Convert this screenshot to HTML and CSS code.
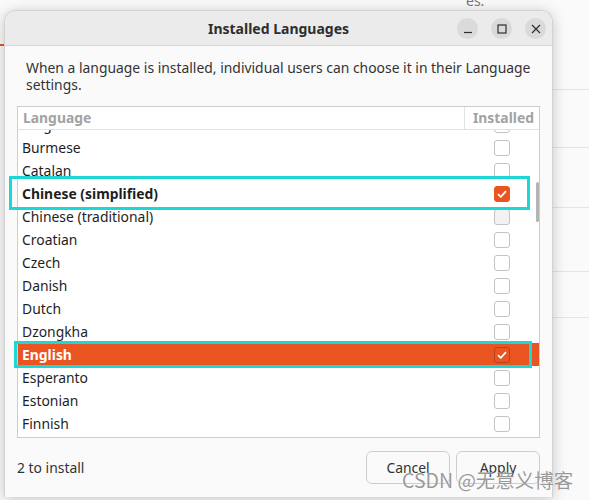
FILE: index.html
```html
<!DOCTYPE html>
<html>
<head>
<meta charset="UTF-8">
<title>Installed Languages</title>
<link rel="stylesheet" href="styles.css">
</head>
<body>

<div class="desktop">
	<div class="behind">
		<div class="behind-tab"></div>
		<div class="behind-line" style="top: 89px"></div>
		<div class="behind-line" style="top: 147px"></div>
		<div class="behind-line" style="top: 207px"></div>
		<div class="behind-line" style="top: 271px"></div>
		<div class="behind-line" style="top: 317px"></div>
		<span class="behind-text">es.</span>
	</div>

	<div class="window">
		<div class="titlebar">
			<span class="title">Installed Languages</span>
			<div class="controls">
				<button class="ctl" type="button">
					<svg width="10" height="10" viewBox="0 0 10 10"><path d="M1 8.5h8" stroke="#2e2e2e" stroke-width="1.2"/></svg>
				</button>
				<button class="ctl" type="button">
					<svg width="10" height="10" viewBox="0 0 10 10"><rect x="1" y="1" width="8" height="8" fill="none" stroke="#2e2e2e" stroke-width="1.2"/></svg>
				</button>
				<button class="ctl" type="button">
					<svg width="10" height="10" viewBox="0 0 10 10"><path d="M1 1L9 9M9 1L1 9" stroke="#2e2e2e" stroke-width="1.2"/></svg>
				</button>
			</div>
		</div>

		<div class="content">
			<p class="desc">When a language is installed, individual users can choose it in their Language<br>settings.</p>

			<div class="list">
				<div class="list-head">
					<span class="col-name">Language</span>
					<span class="col-inst">Installed</span>
				</div>
				<div class="list-body">
					<div class="row first"><span class="name">Bulgarian</span><span class="inst"><span class="box"></span></span></div>
					<div class="row"><span class="name">Burmese</span><span class="inst"><span class="box"></span></span></div>
					<div class="row"><span class="name">Catalan</span><span class="inst"><span class="box"></span></span></div>
					<div class="row bold"><span class="name">Chinese (simplified)</span><span class="inst"><span class="box on"><svg width="10" height="8" viewBox="0 0 10 8"><path d="M1 4.2L3.8 6.8L9 1.2" fill="none" stroke="#fff" stroke-width="1.8"/></svg></span></span></div>
					<div class="row"><span class="name">Chinese (traditional)</span><span class="inst"><span class="box hover"></span></span></div>
					<div class="row"><span class="name">Croatian</span><span class="inst"><span class="box"></span></span></div>
					<div class="row"><span class="name">Czech</span><span class="inst"><span class="box"></span></span></div>
					<div class="row"><span class="name">Danish</span><span class="inst"><span class="box"></span></span></div>
					<div class="row"><span class="name">Dutch</span><span class="inst"><span class="box"></span></span></div>
					<div class="row"><span class="name">Dzongkha</span><span class="inst"><span class="box"></span></span></div>
					<div class="row selected"><span class="name">English</span><span class="inst"><span class="box on"><svg width="10" height="8" viewBox="0 0 10 8"><path d="M1 4.2L3.8 6.8L9 1.2" fill="none" stroke="#fff" stroke-width="1.8"/></svg></span></span></div>
					<div class="row"><span class="name">Esperanto</span><span class="inst"><span class="box"></span></span></div>
					<div class="row"><span class="name">Estonian</span><span class="inst"><span class="box"></span></span></div>
					<div class="row"><span class="name">Finnish</span><span class="inst"><span class="box"></span></span></div>
					<div class="row"><span class="name">French</span><span class="inst"><span class="box"></span></span></div>
				</div>
				<div class="scrollbar"></div>
			</div>

			<div class="footer">
				<span class="status">2 to install</span>
				<div class="actions">
					<button class="btn" type="button">Cancel</button>
					<button class="btn" type="button">Apply</button>
				</div>
			</div>
		</div>
	</div>

	<div class="mark mark-chinese"></div>
	<div class="mark mark-english"></div>
	<div class="watermark">CSDN @无意义博客</div>
</div>

</body>
</html>
```

FILE: styles.css
```css
* {
	box-sizing: border-box;
}

body {
	margin: 0;
	background: #fafafa;
	font-family: "Noto Sans", "Lato", sans-serif;
	font-size: 13.9px;
	color: #2b2b2b;
}

.desktop {
	position: relative;
	width: 589px;
	height: 500px;
	overflow: hidden;
	padding: 10px 0 0 4px;
	background: #fafafa;
}

/* the window behind the dialog */
.behind-tab {
	position: absolute;
	left: 0;
	top: 44px;
	width: 4px;
	height: 2px;
	background: #e95420;
}

.behind-line {
	position: absolute;
	left: 553px;
	right: 0;
	height: 1px;
	background: #e4e4e4;
}

.behind-text {
	position: absolute;
	left: 466px;
	top: -9px;
	font-size: 14px;
	color: #777;
}

/* dialog */
.window {
	position: relative;
	width: 549px;
	height: 487px;
	background: #fafafa;
	border: 1px solid #d2d2d2;
	border-bottom: none;
	border-radius: 12px 12px 0 0;
	box-shadow: 0 2px 14px rgba(0, 0, 0, 0.22);
}

.titlebar {
	position: relative;
	height: 35px;
	background: #ebebeb;
	border-bottom: 1px solid #d6d6d6;
	border-radius: 11px 11px 0 0;
	display: flex;
	align-items: center;
	justify-content: center;
}

.title {
	font-weight: bold;
	font-size: 14px;
	color: #2e2e2e;
}

.controls {
	position: absolute;
	right: 6px;
	top: 7px;
	display: flex;
	gap: 13px;
}

.ctl {
	width: 21px;
	height: 21px;
	border: none;
	border-radius: 50%;
	background: #dadada;
	padding: 0;
	display: flex;
	align-items: center;
	justify-content: center;
}

.content {
	padding: 13px 12px 13px 12px;
}

.desc {
	margin: 0 0 13px 0;
	padding-left: 9px;
	line-height: 17px;
	color: #333;
}

.list {
	position: relative;
	height: 332px;
	background: #fff;
	border: 1px solid #cdcdcd;
	overflow: hidden;
}

.list-head {
	display: flex;
	height: 23px;
	border-bottom: 1px solid #e2e2e2;
	font-weight: bold;
	color: #a2a2a2;
}

.col-name {
	flex: 1;
	padding-left: 5px;
	line-height: 22px;
}

.col-inst {
	width: 75px;
	border-left: 1px solid #e2e2e2;
	text-align: right;
	padding-right: 5px;
	line-height: 22px;
}

.list-body {
	height: 307px;
	overflow: hidden;
}

.row {
	display: flex;
	align-items: center;
	height: 23px;
	color: #1e1e1e;
}

.row.first {
	margin-top: -17px;
}

.row.bold {
	font-weight: bold;
}

.row.selected {
	background: #e95420;
	color: #fff;
	font-weight: bold;
}

.row .name {
	flex: 1;
	padding-left: 4px;
}

.row .inst {
	width: 75px;
	display: flex;
	justify-content: center;
}

.box {
	width: 16px;
	height: 16px;
	border: 1px solid #c4c4c4;
	border-radius: 3px;
	background: #fff;
	display: flex;
	align-items: center;
	justify-content: center;
}

.box.hover {
	background: #f2f2f2;
}

.box.on {
	background: #e95420;
	border-color: #e95420;
}

.row.selected .box.on {
	border-color: #b8431a;
}

.scrollbar {
	position: absolute;
	right: 0;
	top: 75px;
	width: 3px;
	height: 40px;
	border-radius: 2px;
	background: #b5b5b5;
}

.footer {
	display: flex;
	align-items: center;
	justify-content: space-between;
	margin-top: 13px;
}

.status {
	color: #333;
}

.actions {
	display: flex;
	gap: 6px;
}

.btn {
	width: 84px;
	height: 33px;
	border: 1px solid #cdcdcd;
	border-radius: 6px;
	background: #fafafa;
	font-family: inherit;
	font-size: 13.9px;
	color: #333;
}

/* annotations drawn over the screenshot */
.mark {
	position: absolute;
	border: 3px solid #1fd6d6;
}

.mark-chinese {
	left: 9px;
	top: 176px;
	width: 521px;
	height: 34px;
}

.mark-english {
	left: 14px;
	top: 341px;
	width: 518px;
	height: 27px;
}

.watermark {
	position: absolute;
	left: 402px;
	top: 467px;
	font-family: "Noto Sans CJK SC", sans-serif;
	font-size: 19.5px;
	line-height: 26px;
	color: rgba(120, 120, 120, 0.75);
	text-shadow: 0 0 1px #fff;
}
```
